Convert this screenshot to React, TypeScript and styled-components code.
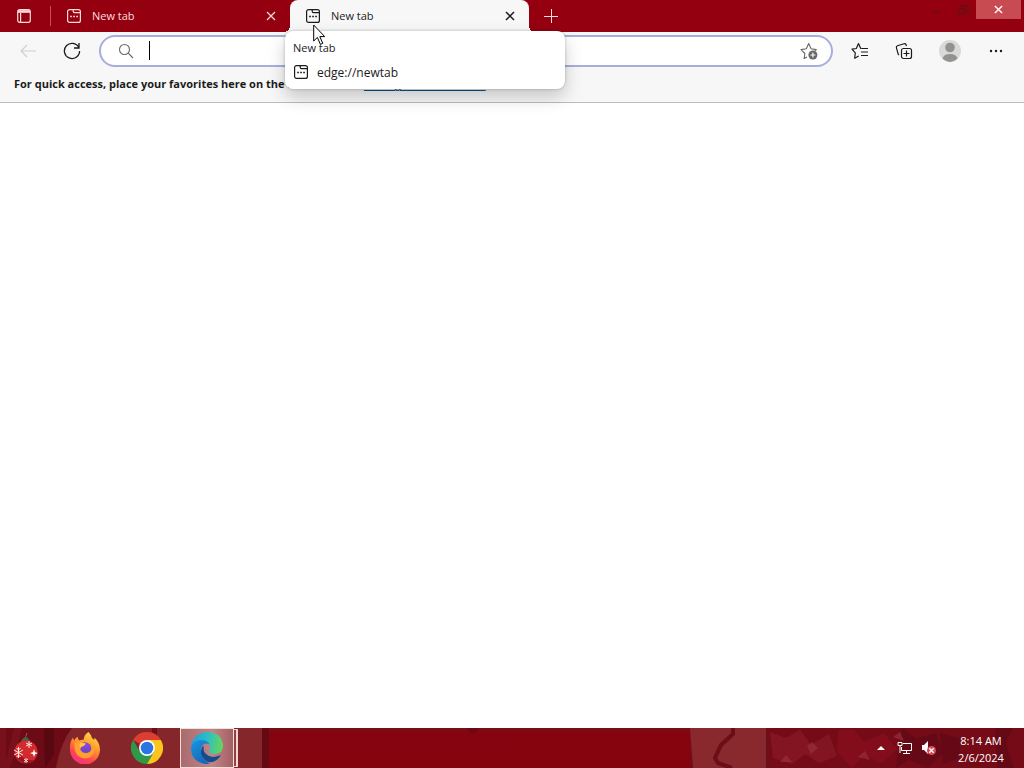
import React from "react";
import styled, { createGlobalStyle } from "styled-components";

const GlobalStyle = createGlobalStyle`
  * { box-sizing: border-box; }
  body {
    margin: 0;
    background: #fff;
    font-family: "Open Sans", "Noto Sans", sans-serif;
    font-size: 11px;
    line-height: 16px;
    color: #1b1b1b;
  }
  button, input { font: inherit; color: inherit; }
  svg { display: block; flex: none; }
`;

const Screen = styled.div`
  display: flex;
  flex-direction: column;
  min-height: 100vh;
`;

const TabStrip = styled.header`
  display: flex;
  height: 32px;
  background: #950011;
  color: #fbdcdc;
`;

const IconButton = styled.button<{ $w: number; $h?: number; $color?: string }>`
  display: flex;
  flex: none;
  align-items: center;
  justify-content: center;
  width: ${(p) => p.$w}px;
  height: ${(p) => p.$h ?? 32}px;
  padding: 0;
  border: 0;
  background: transparent;
  color: ${(p) => p.$color ?? "inherit"};
`;

const Divider = styled.div`
  width: 1px;
  height: 20px;
  margin: 6px 0 0 2px;
  background: #c4505a;
`;

const Tab = styled.div<{ $active?: boolean }>`
  position: relative;
  display: flex;
  align-items: center;
  width: 239px;
  height: 32px;
  padding-left: 15px;
  border-radius: 8px 8px 0 0;
  background: ${(p) => (p.$active ? "#f7f7f7" : "transparent")};
  color: ${(p) => (p.$active ? "#1b1b1b" : "#fbdcdc")};

  &::before,
  &::after {
    content: ${(p) => (p.$active ? '""' : "none")};
    position: absolute;
    bottom: 0;
    width: 6px;
    height: 6px;
  }
  &::before {
    right: 100%;
    background: radial-gradient(circle at 0 0, transparent 6px, #f7f7f7 6px);
  }
  &::after {
    left: 100%;
    background: radial-gradient(circle at 100% 0, transparent 6px, #f7f7f7 6px);
  }
`;

const TabButton = styled.button`
  display: flex;
  flex: 1;
  align-items: center;
  gap: 10px;
  height: 32px;
  padding: 0;
  border: 0;
  background: transparent;
`;

const WindowControls = styled.div`
  display: flex;
  align-items: flex-start;
  margin-left: auto;
  padding-right: 3px;
`;

const CloseWindow = styled.button`
  display: flex;
  align-items: center;
  justify-content: center;
  width: 45px;
  height: 19px;
  padding: 0;
  border: 0;
  background: #c94b52;
  color: #fff;
`;

const Toolbar = styled.div`
  display: flex;
  align-items: center;
  height: 38px;
  padding: 0 6px;
  background: #f7f7f7;
`;

const AddressBar = styled.label`
  display: flex;
  flex: 1;
  align-items: center;
  height: 32px;
  margin: 0 5px;
  padding: 0 12px 0 17px;
  border: 2px solid #a6afdc;
  border-radius: 16px;
  background: #fff;
`;

const Caret = styled.span`
  width: 1px;
  height: 19px;
  margin: 0 2px 2px 15px;
  background: #000;
`;

const AddressInput = styled.input`
  flex: 1;
  min-width: 0;
  height: 24px;
  padding: 0;
  border: 0;
  outline: 0;
  background: transparent;
`;

const FavoritesBar = styled.div`
  height: 33px;
  padding: 6px 14px;
  border-bottom: 1px solid #bcbcbc;
  background: #f7f7f7;
  font-weight: 700;
  white-space: nowrap;
`;

const FavoritesLink = styled.a`
  color: #0a568f;
  text-decoration: underline;
  text-decoration-thickness: 1px;
  text-underline-offset: 2px;
`;

const Page = styled.main`
  flex: 1;
  background: #fff;
`;

const Tooltip = styled.div`
  position: absolute;
  z-index: 2;
  top: 31px;
  left: -5px;
  width: 280px;
  padding: 9px 8px 7px;
  border-radius: 8px;
  background: #fff;
  box-shadow: 0 8px 18px rgba(0, 0, 0, 0.2), 0 0 3px rgba(0, 0, 0, 0.25);
`;

const TooltipUrl = styled.div`
  display: flex;
  align-items: flex-start;
  gap: 8px;
  margin-top: 8px;
  font-size: 12px;
  line-height: 18px;
`;

const Cursor = styled.svg`
  position: absolute;
  z-index: 3;
  top: 24px;
  left: 23px;
`;

const Taskbar = styled.footer`
  position: relative;
  display: flex;
  height: 40px;
  background: linear-gradient(#741019 0, #86040f 6px, #84040e 100%);
  color: #fff;
  overflow: hidden;
`;

const Wallpaper = styled.svg<{ $side: "left" | "right" }>`
  position: absolute;
  top: 0;
  ${(p) => p.$side}: 0;
`;

const Apps = styled.nav`
  position: relative;
  display: flex;
  gap: 6px;
`;

const AppButton = styled.button<{ $w: number; $open?: boolean }>`
  display: flex;
  align-items: center;
  justify-content: center;
  width: ${(p) => p.$w}px;
  height: 40px;
  padding: 0;
  border: ${(p) => (p.$open ? "1px solid #f6dedb" : "0")};
  background: ${(p) => (p.$open ? "linear-gradient(90deg, #ab6b6e, #bf8587 60%, #a46064)" : "transparent")};
`;

const StackEdge = styled.div`
  width: 4px;
  height: 38px;
  margin: 1px 0 0 -6px;
  border: 1px solid #f1d6d3;
  border-left: 0;
  border-right-width: 2px;
  background: #914044;
`;

const Tray = styled.div`
  position: relative;
  display: flex;
  align-items: center;
  margin-left: auto;
  padding-right: 3px;
`;

const Clock = styled.time`
  width: 80px;
  padding-top: 2px;
  text-align: center;
  line-height: 17px;
`;

function PageIcon() {
  return (
    <svg width="16" height="16" viewBox="0 0 16 16" fill="none" stroke="currentColor" strokeWidth="1.2">
      <rect x="1.6" y="1.6" width="12.8" height="12.8" rx="2" />
      <path d="M7.2 1.8v1.5q0 1.3 1.3 1.3h5.8" />
      <path d="M4.2 8.5h1.7M7.2 8.5h1.7M10.2 8.5h1.7" strokeWidth="1.7" />
    </svg>
  );
}

function CloseIcon({ size = 10, weight = 1.4 }: { size?: number; weight?: number }) {
  return (
    <svg width={size} height={size} viewBox="0 0 10 10" stroke="currentColor" strokeWidth={weight}>
      <path d="M1 1l8 8M9 1L1 9" />
    </svg>
  );
}

function TabItem({ active, children }: { active?: boolean; children?: React.ReactNode }) {
  return (
    <Tab $active={active}>
      <TabButton>
        <PageIcon />
        New tab
      </TabButton>
      <IconButton $w={38} aria-label="Close tab">
        <CloseIcon weight={active ? 1.5 : 1.2} />
      </IconButton>
      {children}
    </Tab>
  );
}

function OrnamentIcon() {
  return (
    <svg width="32" height="36" viewBox="0 0 32 36">
      <path d="M17 11q-1-5 1-8" fill="none" stroke="#84605b" strokeWidth="1" />
      <path d="M12 12q1-5 6-5l3 4-4 3z" fill="#486047" />
      <circle cx="17" cy="22" r="11.5" fill="#d32a2e" />
      <path d="M8 28a12 12 0 0 0 18 2q-9 1-14-4z" fill="#9d151f" />
      <g stroke="#ffe8df" strokeWidth="1" fill="none">
        <path d="M9.500 17v11M5 20l9 5M14 20l-9 5M7.500 18l2 2 2-2M7.500 27l2-2 2 2" />
        <path d="M20 11v7M17 13l6 3M23 13l-6 3" />
        <path d="M17 28v5M15 29l4 3M19 29l-4 3" strokeWidth=".9" />
      </g>
      <path d="M25 19l1 3.200L29 23l-3 1.200L25 27l-1-2.800L21 23l3-.8z" fill="#fff" />
    </svg>
  );
}

function FirefoxIcon() {
  return (
    <svg width="32" height="32" viewBox="0 0 32 32">
      <defs>
        <linearGradient id="fox" x1=".8" y1="0" x2=".3" y2="1">
          <stop offset="0" stopColor="#ffe24d" />
          <stop offset=".4" stopColor="#ff9a29" />
          <stop offset=".75" stopColor="#ff4550" />
          <stop offset="1" stopColor="#ef2f8a" />
        </linearGradient>
        <linearGradient id="globe" x1="0" y1="0" x2="0" y2="1">
          <stop offset="0" stopColor="#9847dd" />
          <stop offset="1" stopColor="#5944c5" />
        </linearGradient>
      </defs>
      <path d="M19.500 0q2.500 2.500 3.500 6 1.500 1 2 2 .8-1 .5-2.500 5.500 5.500 5.500 12A15 15 0 0 1 1 17.500Q.5 10 4 5.500q.3 2 1.200 3Q6.500 6 8.500 4.800q.2 2.400 2 3.600 1.700-.8 4-.4.500-5.500 5-8z" fill="url(#fox)" />
      <circle cx="15.800" cy="17" r="6.800" fill="url(#globe)" />
      <path d="M5.500 11q3-2.500 6.500-1 1.800 1.400 4.500 1.600-.2 2-3 2.700-2 .7-2.200 3Q12.500 21 17 21q4 0 5.500-4 .2-3.600-2-6.500 6 2.500 5 9-2.500 7-9.500 7-8-.5-10-8-.8-4-.5-7.500z" fill="#ff9f2c" />
      <path d="M12 10q2 1.500 4.500 1.600-.2 2-3 2.700-1.500.5-2 1.500Q9 13 12 10z" fill="#ffc64a" />
    </svg>
  );
}

function ChromeIcon() {
  return (
    <svg width="32" height="32" viewBox="0 0 32 32">
      <path d="M16 16L2.140 8A16 16 0 0 1 29.860 8z" fill="#dc3e30" />
      <path d="M2.140 8A16 16 0 0 0 16 32l6.900-12L16 16 9.100 20z" fill="#2c9a49" />
      <path d="M29.860 8A16 16 0 0 1 16 32l6.900-12Q25 13 16 8z" fill="#fbc51c" />
      <circle cx="16" cy="16" r="8" fill="#fff" />
      <circle cx="16" cy="16" r="6.300" fill="#2b74e2" />
    </svg>
  );
}

function EdgeIcon() {
  return (
    <svg width="34" height="34" viewBox="0 0 34 34">
      <defs>
        <linearGradient id="edgeTop" x1="0" y1=".4" x2="1" y2=".5">
          <stop offset="0" stopColor="#209ddd" />
          <stop offset=".5" stopColor="#2bbfc5" />
          <stop offset="1" stopColor="#67d756" />
        </linearGradient>
        <linearGradient id="edgeLeft" x1="0" y1="0" x2=".6" y2="1">
          <stop offset="0" stopColor="#1a95df" />
          <stop offset="1" stopColor="#1169bd" />
        </linearGradient>
      </defs>
      <path d="M1 17A16 16 0 0 1 17 1q15 0 16 14 0 7.500-8 8-7 0-6-3.500 3-3-.5-7Q10 6 1 17z" fill="url(#edgeTop)" />
      <path d="M1 17Q3 9 11 9q6 0 8.500 4-7-2-8.500 5-.5 11 9 14.700-3 .6-6 0Q1 30 1 17z" fill="url(#edgeLeft)" />
      <path d="M12.500 15.500Q9 22 13 27q5 6.500 12 3 4-2.500 5.500-5 .3-1-.9-.5Q21 28 16 23q-3.500-3-2-7.500z" fill="#134b8c" />
    </svg>
  );
}

export default function App() {
  return (
    <Screen>
      <GlobalStyle />
      <TabStrip>
        <IconButton $w={48} aria-label="Tab actions menu">
          <svg width="14" height="14" viewBox="0 0 14 14" fill="none" stroke="currentColor" strokeWidth="1.200">
            <rect x=".7" y=".7" width="12.600" height="12.600" rx="2" />
            <path d="M1 2.500h12" strokeWidth="2.600" />
            <path d="M3.600 4v9" />
          </svg>
        </IconButton>
        <Divider />
        <TabItem />
        <TabItem active>
          <Tooltip role="tooltip">
            <div>New tab</div>
            <TooltipUrl>
              <PageIcon />
              edge://newtab
            </TooltipUrl>
          </Tooltip>
          <Cursor width="14" height="22" viewBox="0 0 14 22">
            <path d="M.7 1v16l3.700-3.600 3 7 2.400-1-3-6.800h4.900z" fill="#fff" stroke="#000" strokeWidth="1" />
          </Cursor>
        </TabItem>
        <IconButton $w={44} aria-label="New tab">
          <svg width="14" height="14" viewBox="0 0 14 14" stroke="currentColor">
            <path d="M7.500 0v14M0 7.500h14" />
          </svg>
        </IconButton>
        <WindowControls>
          <IconButton $w={27} $h={22} $color="#730b13" aria-label="Minimize">
            <svg width="8" height="8" viewBox="0 0 8 8" fill="currentColor">
              <path d="M1 3h6v3H1z" />
            </svg>
          </IconButton>
          <IconButton $w={27} $h={19} $color="#730b13" aria-label="Restore">
            <svg width="12" height="10" viewBox="0 0 12 10" fill="none" stroke="currentColor" strokeWidth="2">
              <path d="M4 3V1h7v5H9M1 4h7v5H1z" />
            </svg>
          </IconButton>
          <CloseWindow aria-label="Close window">
            <CloseIcon size={9} weight={1.500} />
          </CloseWindow>
        </WindowControls>
      </TabStrip>

      <Toolbar>
        <IconButton $w={44} $color="#cfcfcf" aria-label="Back">
          <svg width="16" height="14" viewBox="0 0 16 14" fill="none" stroke="currentColor" strokeWidth="1.200">
            <path d="M16 7H1M7 1L1 7l6 6" />
          </svg>
        </IconButton>
        <IconButton $w={44} aria-label="Refresh">
          <svg width="18" height="18" viewBox="0 0 18 18" fill="none" stroke="currentColor" strokeWidth="1.300">
            <path d="M15.800 5.500A7.600 7.600 0 1 0 16.600 9M16 1v5h-5" />
          </svg>
        </IconButton>
        <AddressBar>
          <svg width="16" height="16" viewBox="0 0 16 16" fill="none" stroke="#666" strokeWidth="1.100">
            <circle cx="6.500" cy="6.500" r="5" />
            <path d="M10.200 10.200l4.800 4.800" />
          </svg>
          <Caret />
          <AddressInput aria-label="Search or enter web address" />
          <IconButton $w={20} $h={24} $color="#686868" aria-label="Add to favorites">
            <svg width="18" height="18" viewBox="0 0 18 18" fill="none" stroke="currentColor" strokeWidth="1.100">
              <path d="M7 15l-2.900 1.500.8-5L1 7.600l5.300-.8L8.700 1.500l2.400 5.300 5.200.8-1.500 1.400" strokeLinejoin="round" />
              <circle cx="12.900" cy="13" r="4.500" fill="currentColor" stroke="none" />
              <path d="M12.900 10.500v5M10.400 13h5" stroke="#fff" />
            </svg>
          </IconButton>
        </AddressBar>
        <IconButton $w={44} aria-label="Favorites">
          <svg width="18" height="18" viewBox="0 0 18 18" fill="none" stroke="currentColor" strokeWidth="1.200" strokeLinejoin="round">
            <path d="M10.300 6.400H9.700L7.500 1.500 5.300 6.500 1 7.100l3.300 3.700-.6 5.400 4-2.200M10.500 6.500H17M10 10h7M10 13.500h7" />
          </svg>
        </IconButton>
        <IconButton $w={44} aria-label="Collections">
          <svg width="18" height="18" viewBox="0 0 18 18" fill="none" stroke="currentColor" strokeWidth="1.200">
            <path d="M4 13l-.7-.6-1.900-6.600Q1 4.200 2.500 3.700L9 1.700q1.400-.4 2 .8l.4 1.500" />
            <rect x="6.500" y="6.500" width="10" height="10" rx="2" />
            <path d="M11.500 8.500v6M8.500 11.500h6" />
          </svg>
        </IconButton>
        <IconButton $w={48} aria-label="Profile">
          <svg width="22" height="22" viewBox="0 0 22 22">
            <circle cx="11" cy="11" r="11" fill="#d9d9d7" />
            <circle cx="11" cy="7.500" r="4.800" fill="#929290" />
            <path d="M3.500 18.300Q5 14 11 14t7.500 4.300A11 11 0 0 1 11 22a11 11 0 0 1-7.500-3.700z" fill="#929290" />
          </svg>
        </IconButton>
        <IconButton $w={44} aria-label="Settings and more">
          <svg width="14" height="4" viewBox="0 0 14 4" fill="currentColor">
            <circle cx="2" cy="2" r="1.200" />
            <circle cx="7" cy="2" r="1.200" />
            <circle cx="12" cy="2" r="1.200" />
          </svg>
        </IconButton>
      </Toolbar>

      <FavoritesBar>
        For quick access, place your favorites here on the favorites bar.{" "}
        <FavoritesLink href="#favorites">Manage favorites now</FavoritesLink>
      </FavoritesBar>

      <Page />

      <Taskbar>
        <Wallpaper $side="left" width="480" height="40" viewBox="0 0 480 40" aria-hidden="true">
          <rect width="72" height="40" fill="#6c0a15" />
          <path d="M0 0h6v40H0zM14 0h8l-4 16-8 24H4z" fill="#801522" opacity=".6" />
          <path d="M44 0h10v26l-9 14z" fill="#580811" />
          <path d="M56 40Q60 16 72 0h190v40z" fill="#85262b" />
          <path d="M152 0h5v10h-5z" fill="#6a1019" />
          <path d="M262 0h7v40h-7z" fill="#650a12" />
          <path d="M467 0h12q-6 10-12 0z" fill="#6b0812" />
        </Wallpaper>
        <Wallpaper $side="right" width="334" height="40" viewBox="0 0 334 40" aria-hidden="true">
          <rect width="334" height="40" fill="#760b18" />
          <path d="M0 0h78v40H3z" fill="#89282d" />
          <path d="M43 0v6L31 17l-6 13 3 5 14 5" fill="none" stroke="#6c0e17" strokeWidth="4" />
          <path d="M76 0h3v40h-3z" fill="#6b101a" />
          <path d="M80 4l16 6 14-8 11 15 18-11 8 22-18 7-14-9-13 10-19-6z" fill="#8b1b29" opacity=".65" />
          <path d="M148 2h16l10 12 20-9 13 16-15 14-18-8-12 13-15-16z" fill="#8a0e1d" opacity=".7" />
          <path d="M212 0l14 10 20-5 7 20-15 15-19-8-13 8zM250 4l20 7v19l-17 6zM305 0h18l-7 15 8 25h-17z" fill="#5d0915" opacity=".65" />
          <path d="M90 34l6-7 6 7zM117 18l5-4 6 6-7 6zM168 29l7-6 5 9zM203 9l7-5 4 9z" fill="#9b3440" opacity=".6" />
        </Wallpaper>
        <Apps>
          <AppButton $w={50} aria-label="Start"><OrnamentIcon /></AppButton>
          <AppButton $w={58} aria-label="Firefox"><FirefoxIcon /></AppButton>
          <AppButton $w={54} aria-label="Chrome"><ChromeIcon /></AppButton>
          <AppButton $w={54} $open aria-label="Microsoft Edge"><EdgeIcon /></AppButton>
          <StackEdge />
        </Apps>
        <Tray>
          <IconButton $w={24} aria-label="Show hidden icons">
            <svg width="8" height="4" viewBox="0 0 8 4" fill="currentColor"><path d="M0 4l4-4 4 4z" /></svg>
          </IconButton>
          <IconButton $w={24} aria-label="Network">
            <svg width="16" height="14" viewBox="0 0 16 14" fill="none" stroke="currentColor">
              <path d="M6 2.500h8.500v7H4.500V6M9.500 9.500v3M6 12.500h7" />
              <path d="M1 1.500h4v3H1zM3 5v7" />
            </svg>
          </IconButton>
          <IconButton $w={24} aria-label="Volume muted">
            <svg width="16" height="16" viewBox="0 0 16 16">
              <path d="M1 5h2l4-4v13l-4-4H1z" fill="#fff" />
              <circle cx="10.500" cy="10.500" r="4.500" fill="#d94a57" />
              <path d="M8.300 8.300l4.400 4.400M12.700 8.300l-4.400 4.400" stroke="#fff" strokeWidth="1.300" />
            </svg>
          </IconButton>
          <Clock dateTime="2024-02-06T08:14">
            8:14 AM
            <br />
            2/6/2024
          </Clock>
        </Tray>
      </Taskbar>
    </Screen>
  );
}
